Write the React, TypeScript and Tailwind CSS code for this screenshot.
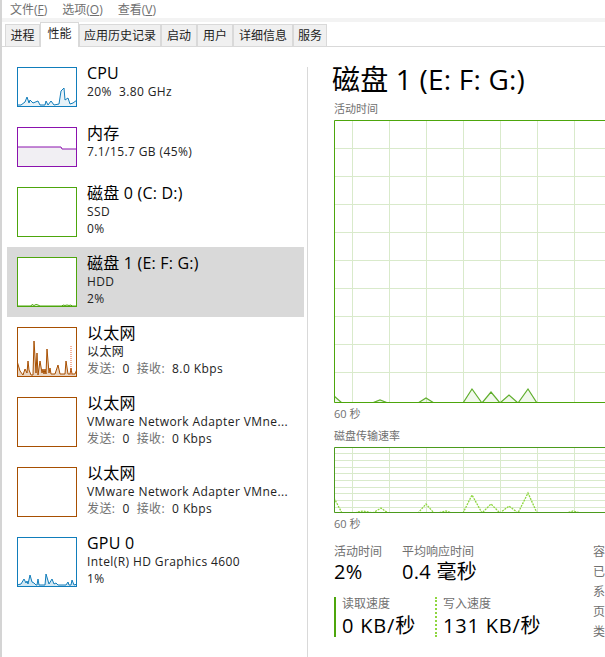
const font = "font-['Open_Sans','Noto_Sans_CJK_SC',sans-serif]";

type Item = {
  title: string;
  lines: React.ReactNode[];
  height: number;
  color: string;
  fill?: string;
  points?: string;
  dashed?: string;
  selected?: boolean;
};

const muted = (s: string) => <span className="text-[#707070]">{s}</span>;

const items: Item[] = [
  {
    title: 'CPU',
    lines: ['20%  3.80 GHz'],
    height: 40,
    color: '#117dbb',
    fill: '#117dbb1a',
    points: '0,38 4,38 8,35 10,30 12,36 13,33 16,36 21,34 23,38 28,38 29,34 31,38 34,34 37,38 42,37 44,24 47,21 48,33 51,31 53,37 56,36 60,33',
  },
  {
    title: '内存',
    lines: ['7.1/15.7 GB (45%)'],
    height: 40,
    color: '#8b12ae',
    fill: '#f1eff3',
    points: '0,20 44,20 45,22 60,22',
  },
  { title: '磁盘 0 (C: D:)', lines: ['SSD', '0%'], height: 50, color: '#4da60c' },
  {
    title: '磁盘 1 (E: F: G:)',
    lines: ['HDD', '2%'],
    height: 50,
    color: '#4da60c',
    fill: '#4da60c1a',
    points: '0,49 14,49 15,47.5 17,48.5 19,47.5 21,48 23,49 45,49 46,48 48,48.5 50,48 52,48.5 54,48 55,49 60,49',
    selected: true,
  },
  {
    title: '以太网',
    lines: ['以太网', <>{muted('发送:')}  0  {muted('接收:')}  8.0 Kbps</>],
    height: 50,
    color: '#a74f01',
    fill: '#a74f0140',
    points: '0,34 3,44 6,48 8,42 10,46 11,34 12,43 14,48 16,48 17,14 19,46 20,26 21,48 23,34 25,46 26,42 27,47 28,42 29,47 30,22 32,46 33,41 34,47 38,47 41,38 43,47 48,47 49,34 51,47 53,47 54,41 55,47 58,47 60,42',
    dashed: '54,19 54,48',
  },
  {
    title: '以太网',
    lines: ['VMware Network Adapter VMne...', <>{muted('发送:')}  0  {muted('接收:')}  0 Kbps</>],
    height: 50,
    color: '#a74f01',
  },
  {
    title: '以太网',
    lines: ['VMware Network Adapter VMne...', <>{muted('发送:')}  0  {muted('接收:')}  0 Kbps</>],
    height: 50,
    color: '#a74f01',
  },
  {
    title: 'GPU 0',
    lines: ['Intel(R) HD Graphics 4600', '1%'],
    height: 50,
    color: '#117dbb',
    fill: '#117dbb30',
    points: '0,48 4,47 7,42 9,46 10,44 11,47 13,38 15,45 17,46 19,48 20,48 21,42 22,48 28,48 29,37 32,47 35,42 37,47 39,46 41,48 49,48 51,45 52,48 54,48 55,43 57,48 60,47',
  },
];

const tabs = [
  { name: '进程', w: 'w-[35px]' },
  { name: '性能', w: 'w-[39px]', active: true },
  { name: '应用历史记录', w: 'w-[82px]' },
  { name: '启动', w: 'w-[36px]' },
  { name: '用户', w: 'w-[36px]' },
  { name: '详细信息', w: 'w-[60px]' },
  { name: '服务', w: 'w-[34px]' },
];

function Thumb({ item }: { item: Item }) {
  const h = item.height;
  return (
    <svg width="60" height={h} viewBox={`0 0 60 ${h}`} className="shrink-0 bg-white">
      {item.points && (
        <>
          <polygon points={`0,${h} ${item.points} 60,${h}`} fill={item.fill} />
          <polyline points={item.points} fill="none" stroke={item.color} strokeWidth="1" />
        </>
      )}
      {item.dashed && <polyline points={item.dashed} fill="none" stroke="#e8693a" strokeWidth="1" strokeDasharray="1 1" />}
      <rect x="0.5" y="0.5" width="59" height={h - 1} fill="none" stroke={item.color} />
    </svg>
  );
}

function SideItem({ item }: { item: Item }) {
  return (
    <div className={`flex gap-[10px] py-[10px] pl-[10px] ${item.selected ? 'bg-[#d9d9d9]' : ''}`}>
      <Thumb item={item} />
      <div className="w-[205px] text-[12px] leading-[17px] tracking-[0.4px] whitespace-pre text-[#222]">
        <div className="-mt-[4px] text-[16px] leading-[20px] tracking-[0.2px] text-black">{item.title}</div>
        {item.lines.map((l, i) => (
          <div key={i}>{l}</div>
        ))}
      </div>
    </div>
  );
}

function Chart({
  height,
  rows,
  border,
  line,
  dashed,
  points,
}: {
  height: number;
  rows: number[];
  border: string;
  line: string;
  dashed?: boolean;
  points: string;
}) {
  const cols = [18, 55, 92, 129, 166, 203, 240, 277];
  return (
    <svg width="300" height={height} viewBox={`0 0 300 ${height}`} className="block">
      {cols.map((x) => (
        <line key={x} x1={x + 0.5} x2={x + 0.5} y1="0" y2={height} stroke="#d9eacb" />
      ))}
      {rows.map((y) => (
        <line key={y} x1="0" x2="300" y1={y + 0.5} y2={y + 0.5} stroke="#d9eacb" />
      ))}
      {!dashed && <polygon points={`0,${height} ${points} 300,${height}`} fill="#4da60c" fillOpacity="0.08" />}
      <polyline
        points={points}
        fill="none"
        stroke={line}
        strokeWidth={dashed ? 1.3 : 1.2}
        strokeDasharray={dashed ? '2 1' : undefined}
      />
      <path d={`M300 0.5H0.5V${height - 0.5}H300`} fill="none" stroke={border} />
    </svg>
  );
}

function Stat({
  label,
  value,
  className,
  valueClass,
}: {
  label: string;
  value: string;
  className?: string;
  valueClass: string;
}) {
  return (
    <div className={className}>
      <div className="text-[12px] leading-[16px] text-[#707070]">{label}</div>
      <div className={`text-[20px] text-black ${valueClass}`}>{value}</div>
    </div>
  );
}

export default function App() {
  return (
    <div className={`flex h-[657px] w-[605px] flex-col overflow-hidden border-l-2 border-[#d4d4d4] bg-white ${font}`}>
      <div className="flex h-[18px] items-center gap-[15px] pt-[1px] pl-[8px] text-[12px] text-[#707070]">
        <span>文件(<u>F</u>)</span>
        <span>选项(<u>O</u>)</span>
        <span>查看(<u>V</u>)</span>
      </div>
      <div className="h-[4px] bg-[#f3f3f3]" />
      <div className="flex h-[25px] items-end border-b border-[#d9d9d9] pl-[3px] text-[12px] text-[#222]">
        {tabs.map((t) =>
          t.active ? (
            <div key={t.name} className={`-mb-[1px] flex h-[25px] items-center justify-center border border-b-0 border-[#d9d9d9] bg-white pb-[3px] ${t.w}`}>
              {t.name}
            </div>
          ) : (
            <div key={t.name} className={`flex h-[22px] items-center justify-center border-t border-r border-l border-[#d9d9d9] bg-[#f0f0f0] ${t.w}`}>
              {t.name}
            </div>
          ),
        )}
      </div>
      <div className="flex flex-1">
        <div className="w-[305px] shrink-0 pt-[10px] pr-[3px] pl-[5px]">
          {items.map((item, i) => (
            <SideItem key={i} item={item} />
          ))}
        </div>
        <div className="mt-[20px] w-px shrink-0 bg-[#d9d9d9]" />
        <div className="min-w-0 flex-1 pl-[26px]">
          <div className="mt-[14px] -ml-[2px] text-[28px] leading-[36px] tracking-[0.2px] whitespace-pre text-black">磁盘 1 (E: F: G:)</div>
          <div className="mt-[4px] text-[11px] leading-[16px] text-[#707070]">活动时间</div>
          <div className="mt-[3px]">
            <Chart
              height={283}
              rows={[28, 56, 84, 112, 140, 168, 196, 224, 252]}
              border="#4da60c"
              line="#5fae2c"
              points="0,276 8,283 38,283 46,280 54,283 84,283 92,278 100,283 129,283 138,269 148,283 157,272 166,283 175,275 184,283 194,269 203,283 300,283"
            />
          </div>
          <div className="mt-[3px] text-[11px] leading-[16px] text-[#707070]">60 秒</div>
          <div className="mt-[6px] text-[11px] leading-[16px] text-[#707070]">磁盘传输速率</div>
          <div className="mt-[3px]">
            <Chart
              height={66}
              rows={[6, 13, 20, 26, 33, 40, 46, 53, 60]}
              border="#4b9b1d"
              line="#8ed63f"
              dashed
              points="0,51 8,66 20,66 24,65 29,64 34,65 39,66 47,61 54,66 84,66 92,57 100,66 104,66 108,65 112,64 118,66 129,66 138,48 148,66 157,57 166,66 175,59 184,66 194,46 203,66 233,66 239,64 247,66 300,66"
            />
          </div>
          <div className="mt-[3px] text-[11px] leading-[16px] text-[#707070]">60 秒</div>
          <div className="flex w-[271px]">
            <div className="w-[259px] shrink-0">
              <div className="mt-[12px] flex">
                <Stat label="活动时间" value="2%" className="w-[68px]" valueClass="leading-[24px] tracking-[0.3px]" />
                <Stat label="平均响应时间" value="0.4 毫秒" valueClass="leading-[24px] tracking-[0.3px]" />
              </div>
              <div className="mt-[13px] flex">
                <div className="h-[40px] w-[101px] border-l-2 border-[#4da60c] pl-[6px]">
                  <Stat label="读取速度" value="0 KB/秒" className="-mt-[1px]" valueClass="leading-[28px] tracking-[0.8px]" />
                </div>
                <div className="h-[40px] border-l-2 border-dotted border-[#8ed63f] pl-[6px]">
                  <Stat label="写入速度" value="131 KB/秒" className="-mt-[1px]" valueClass="leading-[28px] tracking-[0.8px]" />
                </div>
              </div>
            </div>
            <div className="mt-[10px] text-[12px] leading-[20px] text-[#707070]">
              <div>容</div>
              <div>已</div>
              <div>系</div>
              <div>页</div>
              <div>类</div>
            </div>
          </div>
        </div>
      </div>
    </div>
  );
}
